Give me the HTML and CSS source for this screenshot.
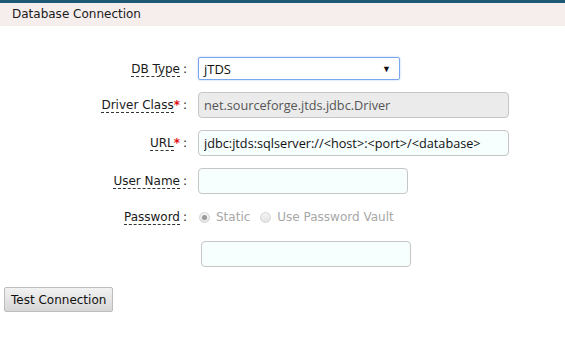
FILE: index.html
```html
<!DOCTYPE html>
<html lang="en">

<head>
    <meta charset="UTF-8">
    <link rel="stylesheet" href="styles.css">
    <title>Database Connection</title>
</head>

<body>
    <div class="panel-header">Database Connection</div>

    <div class="form-grid">
        <label class="field-label"><span class="term">DB Type</span></label>
        <span class="colon">:</span>
        <div class="field">
            <div class="select-box">
                <span>jTDS</span>
                <span class="caret">&#9660;</span>
            </div>
        </div>

        <label class="field-label"><span class="term">Driver Class</span><span class="req">*</span></label>
        <span class="colon">:</span>
        <div class="field">
            <input type="text" class="text-input wide readonly" value="net.sourceforge.jtds.jdbc.Driver" readonly>
        </div>

        <label class="field-label"><span class="term">URL</span><span class="req">*</span></label>
        <span class="colon">:</span>
        <div class="field">
            <input type="text" class="text-input wide" value="jdbc:jtds:sqlserver://<host>:<port>/<database>">
        </div>

        <label class="field-label"><span class="term">User Name</span></label>
        <span class="colon">:</span>
        <div class="field">
            <input type="text" class="text-input">
        </div>

        <label class="field-label"><span class="term">Password</span></label>
        <span class="colon">:</span>
        <div class="field radio-group">
            <label class="radio-option"><span class="radio checked"></span>Static</label>
            <label class="radio-option"><span class="radio"></span>Use Password Vault</label>
        </div>

        <span></span>
        <span></span>
        <div class="field pwd-field">
            <input type="password" class="text-input">
        </div>
    </div>

    <div class="actions">
        <button type="button" class="btn">Test Connection</button>
    </div>
</body>

</html>
```

FILE: styles.css
```css
* {
    margin: 0;
    padding: 0;
    box-sizing: border-box;
}

body {
    font-family: 'DejaVu Sans', Tahoma, sans-serif;
    font-size: 12px;
    color: #222222;
    background-color: #ffffff;
}

/* Header */
.panel-header {
    border-top: 3px solid #1d5877;
    background-color: #f6eded;
    height: 26px;
    padding: 4px 0 0 12px;
    font-size: 12px;
    color: #1a1a1a;
}

/* Form */
.form-grid {
    display: grid;
    grid-template-columns: 180px 18px 1fr;
    row-gap: 12px;
    align-items: center;
    padding-top: 31px;
}

.field-label {
    text-align: right;
    color: #1a1a1a;
}

.term {
    border-bottom: 1px dashed #333333;
}

.req {
    color: #e01010;
    font-weight: bold;
}

.colon {
    padding-left: 3px;
    color: #1a1a1a;
}

.select-box {
    width: 202px;
    height: 23px;
    border: 1px solid #7aa6f0;
    border-radius: 2px;
    box-shadow: 0 0 2px #a9c6f6;
    display: flex;
    align-items: center;
    justify-content: space-between;
    padding: 0 8px 0 5px;
    font-family: 'Open Sans', sans-serif;
    font-size: 13px;
    color: #111111;
}

.caret {
    font-size: 9px;
    color: #111111;
}

.text-input {
    width: 210px;
    height: 26px;
    border: 1px solid #c6c6c6;
    border-radius: 4px;
    background-color: #f6fefe;
    padding: 0 5px;
    font-family: 'Open Sans', sans-serif;
    font-size: 12.7px;
    color: #111111;
    outline: none;
}

.text-input.wide {
    width: 311px;
}

.text-input.readonly {
    background-color: #ebebeb;
    color: #555555;
}

.radio-group {
    display: flex;
    gap: 9px;
    height: 22px;
    align-items: center;
}

.radio-option {
    display: flex;
    align-items: center;
    gap: 6px;
    color: #a8a8a8;
}

.radio {
    width: 11px;
    height: 11px;
    border-radius: 50%;
    border: 1px solid #d4d4d4;
    background: linear-gradient(#f4f4f4, #e4e4e4);
    margin-left: 1px;
    display: flex;
    align-items: center;
    justify-content: center;
}

.radio.checked::after {
    content: "";
    width: 5px;
    height: 5px;
    border-radius: 50%;
    background-color: #9a9a9a;
}

.pwd-field {
    padding-left: 3px;
    padding-top: 1px;
}

/* Button */
.actions {
    padding: 20px 0 0 4px;
}

.btn {
    font-family: 'DejaVu Sans', Tahoma, sans-serif;
    font-size: 12px;
    color: #111111;
    height: 25px;
    padding: 0 6px;
    border: 1px solid #bdbdbd;
    border-radius: 2px;
    background: linear-gradient(#f2f2f2, #d6d6d6);
    cursor: pointer;
}
```
